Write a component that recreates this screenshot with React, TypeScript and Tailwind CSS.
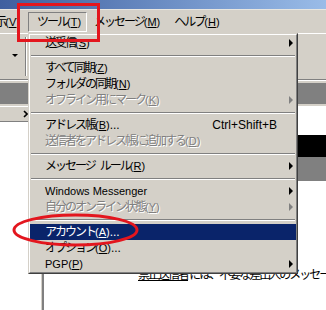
import { Fragment } from "react";

const font = "font-['Liberation_Sans','Noto_Sans_CJK_JP',sans-serif]";

interface MenuItemProps {
    label: string,
    k?: string,
    suffix?: string,
    disabled?: boolean,
    arrow?: boolean,
    shortcut?: string,
    selected?: boolean,
    latin?: boolean
}

const MenuItem = (props: MenuItemProps) => {
    const {label, k, suffix, disabled, arrow, shortcut, selected, latin} = props;
    const color = selected
        ? "bg-[#0a246a] text-white"
        : disabled
            ? "text-[#808080] [text-shadow:1px_1px_0_#ffffff]"
            : "text-black";
    const words = label.split(" ");

    return (
        <div className={`flex items-center h-[16px] pl-[15px] text-[12px] leading-[16px] ${color}`}>
            <span className="flex-1 whitespace-nowrap">
                {latin
                    ? <span className="text-[11px]">{label}</span>
                    : words.map((w, i) => (
                        <Fragment key={i}>
                            {i > 0 && <span className="inline-block w-[5px]" />}
                            <span className="tracking-[-2px]">{w}</span>
                        </Fragment>
                    ))}
                {k && (
                    <span className="text-[11px]">
                        (<span className="underline">{k}</span>)
                    </span>
                )}
                {suffix}
            </span>
            {shortcut && <span className="whitespace-nowrap text-[12px]">{shortcut}</span>}
            <span className="w-[19px] flex justify-end pr-[3px]">
                {arrow && (
                    <span className={`w-0 h-0 border-y-[4px] border-y-transparent border-l-[4px] ${disabled ? "border-l-[#808080]" : "border-l-black"}`} />
                )}
            </span>
        </div>
    );
};

const Separator = () => (
    <div className="h-[9px] flex items-center px-[1px]">
        <div className="h-[2px] w-full border-t border-t-[#808080] border-b border-b-white" />
    </div>
);

const items: (MenuItemProps | "sep")[] = [
    {label: "送受信", k: "S", arrow: true},
    "sep",
    {label: "すべて同期", k: "Z"},
    {label: "フォルダの同期", k: "N"},
    {label: "オフライン用にマーク", k: "K", disabled: true, arrow: true},
    "sep",
    {label: "アドレス帳", k: "B", suffix: "...", shortcut: "Ctrl+Shift+B"},
    {label: "送信者をアドレス帳に追加する", k: "D", disabled: true},
    "sep",
    {label: "メッセージ ルール", k: "R", arrow: true},
    "sep",
    {label: "Windows Messenger", latin: true, arrow: true},
    {label: "自分のオンライン状態", k: "Y", disabled: true, arrow: true},
    "sep",
    {label: "アカウント", k: "A", suffix: "...", selected: true},
    {label: "オプション", k: "O", suffix: "..."},
    {label: "PGP", k: "P", latin: true, arrow: true}
];

const App = () => {
    return (
        <div className={`relative w-[326px] h-[310px] overflow-hidden bg-white ${font}`}>
            {/* title bar */}
            <div className="h-[9px] bg-gradient-to-r from-[#3f5f9f] to-[#9abce8]" />

            {/* menu bar */}
            <div className="h-[24px] flex items-center bg-[#d4d0c8] border-t border-t-[#e8e6e0] text-[12px] text-black">
                <div className="w-[28px] shrink-0 flex justify-end overflow-hidden pr-[8px]">
                    <span className="whitespace-nowrap"><span className="tracking-[-2px]">表示</span><span className="text-[11px]">(<span className="underline">V</span>)</span></span>
                </div>
                <div className="w-[59px] shrink-0 h-[20px] flex items-center pl-[8px] pt-[1px] border-t border-l border-t-[#808080] border-l-[#808080] border-r border-b border-r-white border-b-white">
                    <span className="whitespace-nowrap"><span className="tracking-[-2px]">ツール</span><span className="text-[11px]">(<span className="underline">T</span>)</span></span>
                </div>
                <div className="pl-[7px] pr-[14px] whitespace-nowrap">
                    <span className="tracking-[-2px]">メッセージ</span><span className="text-[11px]">(<span className="underline">M</span>)</span>
                </div>
                <div className="whitespace-nowrap">
                    <span className="tracking-[-2px]">ヘルプ</span><span className="text-[11px]">(<span className="underline">H</span>)</span>
                </div>
            </div>

            {/* toolbar */}
            <div className="h-[47px] flex bg-[#d4d0c8] border-t border-t-white border-b border-b-[#808080]">
                <div className="w-[25px] shrink-0 flex items-center justify-center pl-[5px] pb-[2px]">
                    <span className="w-0 h-0 border-x-[3px] border-x-transparent border-t-[3px] border-t-black" />
                </div>
                <div className="my-[3px] w-[2px] border-l border-l-[#808080] border-r border-r-white" />
            </div>
            <div className="h-[3px] bg-[#d4d0c8] border-t border-t-white" />

            {/* folder bar */}
            <div className="h-[21px] bg-[#808080]" />
            <div className="h-[3px] bg-[#d4d0c8] border-b border-b-white" />

            {/* panes */}
            <div className="flex h-[203px]">
                <div className="w-[41px] shrink-0 flex flex-col">
                    <div className="h-[15px] flex items-center pl-[23px] bg-[#d4d0c8] border-b border-b-[#808080]">
                        <svg width="5" height="8" viewBox="0 0 5 8">
                            <path d="M1 1 L4 4 L1 7" stroke="black" strokeWidth="1.6" fill="none" />
                        </svg>
                    </div>
                    <div className="flex-1 bg-white" />
                </div>
                <div className="w-[3px] shrink-0 bg-[#808080] border-l border-l-[#d4d0c8]" />
                <div className="flex-1 min-w-0 flex flex-col overflow-hidden">
                    <div className="h-[28px] shrink-0 bg-white" />
                    <div className="h-[22px] shrink-0 bg-black" />
                    <div className="h-[24px] shrink-0 bg-[#808080]" />
                    <div className="flex-1 bg-white pt-[86px] pl-[94px] text-[12px] leading-[16px] text-black whitespace-nowrap tracking-[-2px]">
                        <span className="underline">禁止送信者</span> には、不要な差出人のメッセージ
                    </div>
                </div>
            </div>

            {/* dropdown menu */}
            <div className="absolute left-[28px] top-[33px] w-[270px] border border-t-[#d4d0c8] border-l-[#d4d0c8] border-r-[#404040] border-b-[#404040]">
                <div className="bg-[#d4d0c8] border border-t-white border-l-white border-r-[#808080] border-b-[#808080]">
                    {items.map((item, index) => (
                        <Fragment key={index}>
                            {item === "sep" ? <Separator /> : <MenuItem {...item} />}
                        </Fragment>
                    ))}
                </div>
            </div>

            {/* red annotations */}
            <div className="absolute left-[17px] top-[3px] w-[83px] h-[39px] border-[3px] border-[#e3161e]" />
            <svg className="absolute left-[10px] top-[211px]" width="132" height="38" viewBox="0 0 132 38">
                <ellipse cx="65.5" cy="19" rx="61.5" ry="15" fill="none" stroke="#e3161e" strokeWidth="3" />
            </svg>
        </div>
    );
};

export default App;
